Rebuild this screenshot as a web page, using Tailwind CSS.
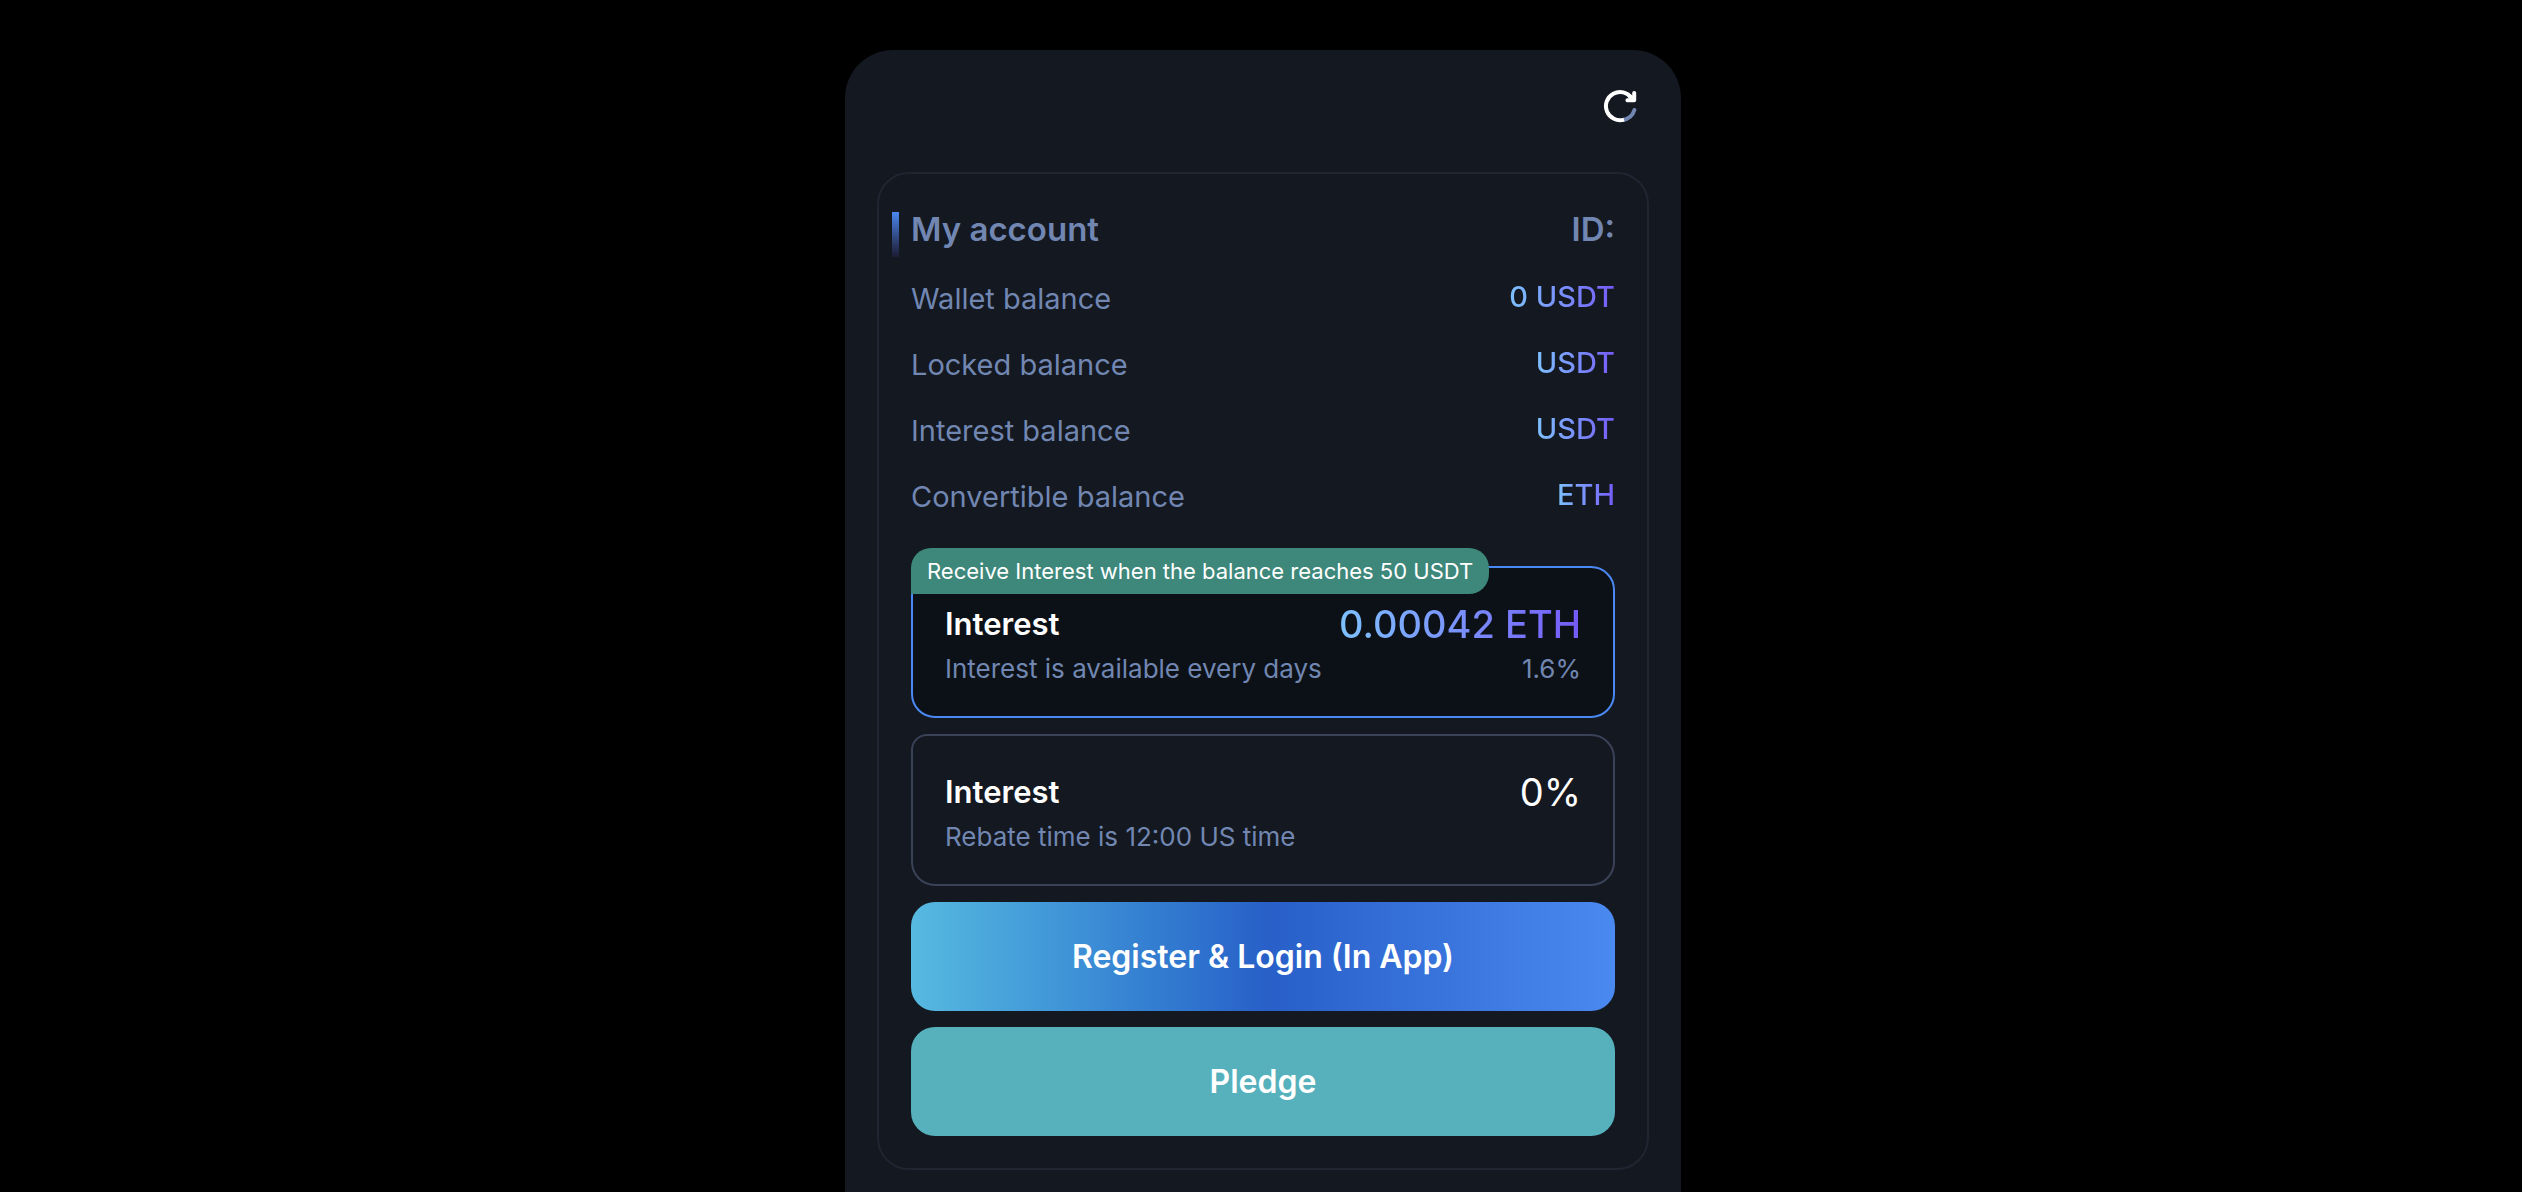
<!DOCTYPE html>
<html lang="en">
<head>
<meta charset="utf-8">
<meta name="viewport" content="width=device-width, initial-scale=1">
<title>My account</title>
<script src="https://cdn.jsdelivr.net/npm/@tailwindcss/browser@4"></script>
</head>
<body class="flex min-h-screen flex-col items-center bg-black pt-[50px] pl-1 font-['Inter',sans-serif] text-white">
<main class="flex w-full max-w-[836px] flex-1 flex-col rounded-t-[48px] bg-[#141821] px-8 pb-5">
  <header class="flex h-[122px] items-start justify-end pt-[39px] pr-3">
    <button type="button" aria-label="Refresh" class="cursor-pointer">
      <svg class="size-[34px]" viewBox="0 0 34 34" fill="none" stroke-width="4" stroke-linecap="round">
        <path d="M31.4 21A14.2 14.2 0 0 1 20 30.9" stroke="#7187b2"/>
        <path d="M21 30.6A14.1 14.1 0 1 1 28.6 9" stroke="#fff" stroke-linecap="butt"/>
        <path d="M31.2 4V11.2H24.4M31 11L26 6.5" stroke="#fff" stroke-linejoin="round"/>
      </svg>
    </button>
  </header>

  <section class="rounded-[32px] border-2 border-[#212531] p-8">
    <div class="relative flex h-12 items-center justify-between text-[33px] font-semibold text-[#7187b2]">
      <span class="absolute top-1.5 -left-[19px] h-[45px] w-[7px] bg-linear-to-b from-[#4a89f3] to-[#1b1c34]"></span>
      <h1>My account</h1>
      <span>ID:</span>
    </div>

    <dl class="pt-3 text-[29px] text-[#7187b2]">
      <div class="flex h-[66px] items-center justify-between">
        <dt>Wallet balance</dt>
        <dd class="mb-1 bg-linear-to-r from-[#7dc1ff] to-[#7559f7] bg-clip-text font-medium text-transparent">0 USDT</dd>
      </div>
      <div class="flex h-[66px] items-center justify-between">
        <dt>Locked balance</dt>
        <dd class="mb-1 bg-linear-to-r from-[#7dc1ff] to-[#7559f7] bg-clip-text font-medium text-transparent">USDT</dd>
      </div>
      <div class="flex h-[66px] items-center justify-between">
        <dt>Interest balance</dt>
        <dd class="mb-1 bg-linear-to-r from-[#7dc1ff] to-[#7559f7] bg-clip-text font-medium text-transparent">USDT</dd>
      </div>
      <div class="flex h-[66px] items-center justify-between">
        <dt>Convertible balance</dt>
        <dd class="mb-1 bg-linear-to-r from-[#7dc1ff] to-[#7559f7] bg-clip-text font-medium text-transparent">ETH</dd>
      </div>
    </dl>

    <div class="mt-9 flex flex-col gap-4">
      <article class="relative rounded-3xl border-2 border-[#4a89f3] bg-[#0c1117] px-8 pt-8 pb-7">
        <p class="absolute -top-5 -left-0.5 flex h-[46px] items-center rounded-t-[20px] rounded-br-[20px] bg-[#3d877b] px-4 text-[22px] whitespace-nowrap">Receive Interest when the balance reaches 50 USDT</p>
        <div class="flex h-12 items-center justify-between">
          <h2 class="text-[31px] font-semibold">Interest</h2>
          <span class="bg-linear-to-r from-[#7dc1ff] to-[#7559f7] bg-clip-text text-[38px] font-medium text-transparent">0.00042 ETH</span>
        </div>
        <div class="flex h-10 items-center justify-between text-[26px] text-[#7187b2]">
          <p>Interest is available every days</p>
          <span>1.6%</span>
        </div>
      </article>

      <article class="rounded-3xl rounded-tl-[16px] border-2 border-[#3a4257] px-8 pt-8 pb-7">
        <div class="flex h-12 items-center justify-between">
          <h2 class="text-[31px] font-semibold">Interest</h2>
          <span class="text-[38px]">0%</span>
        </div>
        <p class="flex h-10 items-center text-[26px] text-[#7187b2]">Rebate time is 12:00 US time</p>
      </article>

      <button type="button" class="h-[109px] cursor-pointer rounded-3xl bg-linear-to-r from-[#57bae0] via-[#285fc8] via-51% to-[#4a89f0] text-[32px] font-semibold">Register &amp; Login (In App)</button>
      <button type="button" class="h-[109px] cursor-pointer rounded-3xl bg-[#56b1bc] text-[32px] font-semibold">Pledge</button>
    </div>
  </section>
</main>
</body>
</html>
